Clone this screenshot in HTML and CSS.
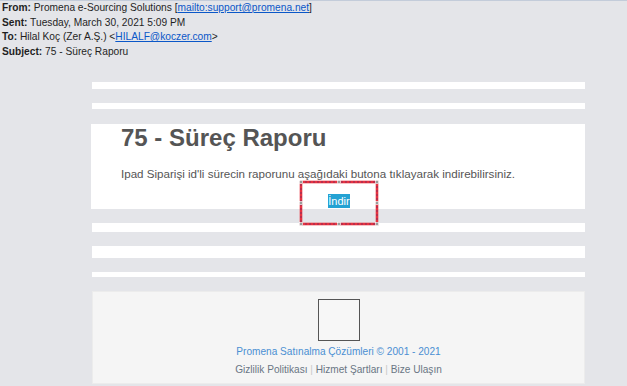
FILE: index.html
```html
<!DOCTYPE html>
<html lang="tr">
<head>
<meta charset="utf-8">
<title>75 - Süreç Raporu</title>
<link rel="stylesheet" href="styles.css">
</head>
<body>
<div class="page">
  <div class="headers">
    <div class="hline"><b>From:</b> Promena e-Sourcing Solutions [<a href="#">mailto:support@promena.net</a>]</div>
    <div class="hline"><b>Sent:</b> Tuesday, March 30, 2021 5:09 PM</div>
    <div class="hline"><b>To:</b> Hilal Koç (Zer A.Ş.) &lt;<a href="#">HILALF@koczer.com</a>&gt;</div>
    <div class="hline"><b>Subject:</b> 75 - Süreç Raporu</div>
  </div>
  <div class="mail">
    <div class="bar bar-a"></div>
    <div class="bar bar-b"></div>
    <div class="card">
      <h1 class="title">75 - Süreç Raporu</h1>
      <p class="text">Ipad Siparişi id'li sürecin raporunu aşağıdaki butona tıklayarak indirebilirsiniz.</p>
      <div class="btn-row"><span class="btn">İndir</span></div>
    </div>
    <div class="bar bar-c"></div>
    <div class="bar bar-d"></div>
    <div class="bar bar-e"></div>
    <div class="footer">
      <div class="logo"></div>
      <div class="copy">Promena Satınalma Çözümleri © 2001 - 2021</div>
      <div class="links">Gizlilik Politikası <span class="sep">|</span> Hizmet Şartları <span class="sep">|</span> Bize Ulaşın</div>
    </div>
  </div>
  <svg class="select-box" width="80" height="46" viewBox="0 0 80 46">
    <rect x="2" y="2" width="76" height="42" fill="none" stroke="#e8323f" stroke-width="2.6"/>
    <rect x="2" y="2" width="76" height="42" fill="none" stroke="#8a2a5a" stroke-width="1" stroke-dasharray="2 2"/>
    <g fill="#9a9a9a" stroke="#ffffff" stroke-width="0.6">
      <rect x="0.5" y="0.5" width="3" height="3"/>
      <rect x="38.5" y="0.5" width="3" height="3"/>
      <rect x="76.5" y="0.5" width="3" height="3"/>
      <rect x="0.5" y="21.5" width="3" height="3"/>
      <rect x="76.5" y="21.5" width="3" height="3"/>
      <rect x="0.5" y="42.5" width="3" height="3"/>
      <rect x="38.5" y="42.5" width="3" height="3"/>
      <rect x="76.5" y="42.5" width="3" height="3"/>
    </g>
  </svg>
</div>
</body>
</html>
```
FILE: styles.css
```css
html, body {
  margin: 0;
  padding: 0;
  background: #e4e5e9;
}
.page {
  position: relative;
  width: 627px;
  height: 386px;
  overflow: hidden;
  border-top: 1px solid #c3ccda;
  box-sizing: border-box;
}
.headers {
  padding: 0 0 0 2px;
  font-family: "Liberation Sans", Arial, sans-serif;
  font-size: 10.2px;
  color: #1f1f1f;
  height: 58px;
}
.hline {
  height: 14.7px;
  line-height: 14.7px;
  white-space: nowrap;
}
.hline a {
  color: #0a57c8;
  text-decoration: underline;
}
.mail {
  margin-left: 91px;
  width: 494px;
  padding-top: 23px;
  display: flex;
  flex-direction: column;
}
.bar {
  background: #ffffff;
  margin-left: 1px;
}
.bar-a { height: 7px; margin-bottom: 14px; }
.bar-b { height: 6px; margin-bottom: 15px; }
.card {
  background: #ffffff;
  height: 85px;
  padding: 0 30px;
  box-sizing: border-box;
  margin-bottom: 14px;
  font-family: "Liberation Sans", Arial, sans-serif;
  color: #555555;
}
.title {
  margin: 0;
  font-size: 24px;
  line-height: 28px;
  font-weight: bold;
  color: #555555;
}
.text {
  margin: 15px 0 0;
  font-size: 11.6px;
  line-height: 14px;
  white-space: nowrap;
}
.btn-row {
  display: flex;
  justify-content: center;
  margin-top: 13px;
  padding-left: 2px;
}
.btn {
  display: inline-block;
  background: #24a2d3;
  color: #ffffff;
  font-size: 11px;
  line-height: 14px;
  padding: 0 0.5px;
}
.bar-c { height: 9px; margin-bottom: 14px; }
.bar-d { height: 12px; margin-bottom: 14px; }
.bar-e { height: 5px; margin-bottom: 14px; }
.footer {
  margin-left: 1px;
  height: 93px;
  background: #f5f5f5;
  border: 1px solid #ececec;
  box-sizing: border-box;
  display: flex;
  flex-direction: column;
  align-items: center;
  font-family: "Liberation Sans", Arial, sans-serif;
  padding-top: 7px;
}
.logo {
  width: 42px;
  height: 42px;
  box-sizing: border-box;
  border: 1px solid #555555;
  background: #f7f7f7;
}
.copy {
  margin-top: 4px;
  font-size: 10.1px;
  line-height: 13px;
  color: #4a8fd3;
}
.links {
  margin-top: 5px;
  font-size: 10.1px;
  line-height: 13px;
  color: #6a7684;
}
.sep {
  color: #c8c8c8;
}
.select-box {
  position: absolute;
  left: 299px;
  top: 179px;
}
```
